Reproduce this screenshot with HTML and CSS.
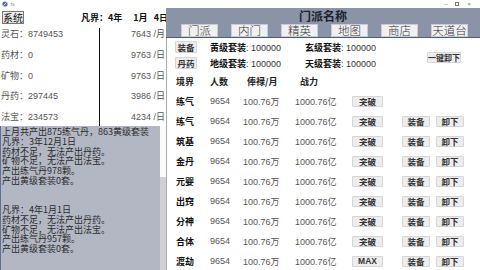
FILE: index.html
```html
<!DOCTYPE html>
<html lang="zh">
<head>
    <meta charset="UTF-8">
    <title>Tk</title>
    <link rel="stylesheet" href="styles.css">
</head>
<body>
<div class="window">
    <div class="titlebar">
        <div class="app-title">
            <svg width="6" height="6" viewBox="0 0 6 6"><circle cx="3" cy="3" r="2.6" fill="#5a6a8a"/><path d="M1.5 4.5 L4.5 1.5" stroke="#e8ecf4" stroke-width="0.9"/></svg>
            <span>Tk</span>
        </div>
        <div class="controls">
            <span>&#8211;</span>
            <span class="max"></span>
            <span>&#215;</span>
        </div>
    </div>

    <div class="main">
        <div class="left">
            <div class="topbar">
                <button class="sys-btn">系统</button>
                <div class="date">
                    <span>凡界：4年</span><span class="gap">1月</span><span class="gap2">4日</span>
                </div>
            </div>

            <div class="resources">
                <div class="res-names">
                    <div class="res-row">灵石：8749453</div>
                    <div class="res-row">药材：0</div>
                    <div class="res-row">矿物：0</div>
                    <div class="res-row">丹药：297445</div>
                    <div class="res-row">法宝：234573</div>
                </div>
                <div class="res-rates">
                    <div class="res-row">7643 /月</div>
                    <div class="res-row">9763 /日</div>
                    <div class="res-row">9763 /日</div>
                    <div class="res-row">3986 /日</div>
                    <div class="res-row">4234 /日</div>
                </div>
            </div>

            <div class="log">
                <div class="log-text">上月共产出875练气丹，863黄级套装
凡界：3年12月1日
药材不足，无法产出丹药。
矿物不足，无法产出法宝。
产出练气丹978颗。
产出黄级套装0套。


凡界：4年1月1日
药材不足，无法产出丹药。
矿物不足，无法产出法宝。
产出练气丹957颗。
产出黄级套装0套。</div>
                <div class="scrollbar"><div class="thumb"></div></div>
            </div>
        </div>

        <div class="right">
            <div class="band">
                <div class="band-title">门派名称</div>
                <div class="tabs">
                    <button class="tab">门派</button>
                    <button class="tab">内门</button>
                    <button class="tab">精英</button>
                    <button class="tab">地图</button>
                    <button class="tab">商店</button>
                    <button class="tab">天道台</button>
                </div>
            </div>

            <div class="body">
                <div class="equip">
                    <button class="btn small">装备</button>
                    <div><b>黄级套装</b>: 100000</div>
                    <div><b>玄级套装</b>: 100000</div>
                    <button class="btn unload-all">一键卸下</button>
                    <button class="btn small">丹药</button>
                    <div><b>地级套装</b>: 100000</div>
                    <div><b>天级套装</b>: 100000</div>
                </div>

                <div class="table">
                    <div class="th">境界</div>
                    <div class="th">人数</div>
                    <div class="th salary">俸禄/月</div>
                    <div class="th power">战力</div>
                    <div></div><div></div><div></div>

                    <div class="name">练气</div>
                    <div class="num">9654</div>
                    <div class="num">100.76<span class="cjk">万</span></div>
                    <div class="num">1000.76<span class="cjk">亿</span></div>
                    <div><button class="btn up">突破</button></div>
                    <div></div><div></div>

                    <div class="name">练气</div>
                    <div class="num">9654</div>
                    <div class="num">100.76<span class="cjk">万</span></div>
                    <div class="num">1000.76<span class="cjk">亿</span></div>
                    <div><button class="btn up">突破</button></div>
                    <div><button class="btn small">装备</button></div>
                    <div><button class="btn small">卸下</button></div>

                    <div class="name">筑基</div>
                    <div class="num">9654</div>
                    <div class="num">100.76<span class="cjk">万</span></div>
                    <div class="num">1000.76<span class="cjk">亿</span></div>
                    <div><button class="btn up">突破</button></div>
                    <div><button class="btn small">装备</button></div>
                    <div><button class="btn small">卸下</button></div>

                    <div class="name">金丹</div>
                    <div class="num">9654</div>
                    <div class="num">100.76<span class="cjk">万</span></div>
                    <div class="num">1000.76<span class="cjk">亿</span></div>
                    <div><button class="btn up">突破</button></div>
                    <div><button class="btn small">装备</button></div>
                    <div><button class="btn small">卸下</button></div>

                    <div class="name">元婴</div>
                    <div class="num">9654</div>
                    <div class="num">100.76<span class="cjk">万</span></div>
                    <div class="num">1000.76<span class="cjk">亿</span></div>
                    <div><button class="btn up">突破</button></div>
                    <div><button class="btn small">装备</button></div>
                    <div><button class="btn small">卸下</button></div>

                    <div class="name">出窍</div>
                    <div class="num">9654</div>
                    <div class="num">100.76<span class="cjk">万</span></div>
                    <div class="num">1000.76<span class="cjk">亿</span></div>
                    <div><button class="btn up">突破</button></div>
                    <div><button class="btn small">装备</button></div>
                    <div><button class="btn small">卸下</button></div>

                    <div class="name">分神</div>
                    <div class="num">9654</div>
                    <div class="num">100.76<span class="cjk">万</span></div>
                    <div class="num">1000.76<span class="cjk">亿</span></div>
                    <div><button class="btn up">突破</button></div>
                    <div><button class="btn small">装备</button></div>
                    <div><button class="btn small">卸下</button></div>

                    <div class="name">合体</div>
                    <div class="num">9654</div>
                    <div class="num">100.76<span class="cjk">万</span></div>
                    <div class="num">1000.76<span class="cjk">亿</span></div>
                    <div><button class="btn up">突破</button></div>
                    <div><button class="btn small">装备</button></div>
                    <div><button class="btn small">卸下</button></div>

                    <div class="name">渡劫</div>
                    <div class="num">9654</div>
                    <div class="num">100.76<span class="cjk">万</span></div>
                    <div class="num">1000.76<span class="cjk">亿</span></div>
                    <div><button class="btn up max-btn">MAX</button></div>
                    <div><button class="btn small">装备</button></div>
                    <div><button class="btn small">卸下</button></div>
                </div>
            </div>
        </div>
    </div>
</div>
</body>
</html>
```

FILE: styles.css
```css
* {
    box-sizing: border-box;
    margin: 0;
    padding: 0;
}
body {
    width: 480px;
    height: 270px;
    overflow: hidden;
    background-color: #ffffff;
    font-family: "Liberation Sans", "Noto Sans CJK SC", sans-serif;
    font-size: 9px;
    color: #333;
}
button {
    padding: 0;
    white-space: nowrap;
    text-align: center;
}
.window {
    width: 480px;
    height: 270px;
    display: flex;
    flex-direction: column;
}

/* title bar */
.titlebar {
    height: 8px;
    display: flex;
    justify-content: space-between;
    align-items: center;
    padding-left: 2px;
}
.app-title {
    display: flex;
    align-items: center;
    gap: 2px;
    font-size: 4px;
    color: #666;
}
.controls {
    display: flex;
    align-items: center;
    gap: 8px;
    padding-right: 9px;
    font-size: 6px;
    color: #777;
}
.controls .max {
    width: 4px;
    height: 4px;
    border: 1px solid #777;
}

.main {
    flex: 1;
    display: flex;
    min-height: 0;
}

/* left side */
.left {
    width: 166px;
    display: flex;
    flex-direction: column;
}
.topbar {
    height: 18px;
    display: flex;
    align-items: flex-start;
    padding: 3px 0 0 2px;
}
.sys-btn {
    width: 24px;
    height: 13px;
    font: 10px/11px "Noto Sans CJK SC", sans-serif;
    color: #111;
    background-color: #ececec;
    border: 1px solid #777;
}
.date {
    margin-left: 57px;
    margin-top: 1px;
    white-space: nowrap;
    font: bold 9px/11px "Noto Sans CJK SC", sans-serif;
    color: #111;
}
.date .gap {
    margin-left: 11px;
}
.date .gap2 {
    margin-left: 6px;
}

.resources {
    height: 100px;
    display: flex;
}
.res-names {
    width: 99px;
    padding-left: 1px;
}
.res-rates {
    flex: 1;
    margin-top: 2px;
    border-left: 1px solid #111;
    text-align: right;
    padding-right: 1px;
}
.res-rates .res-row:first-child {
    margin-top: -2px;
}
.res-row {
    height: 20.75px;
    line-height: 16px;
    color: #555;
}

.log {
    flex: 1;
    display: flex;
    min-height: 0;
    background-color: #b3b7c3;
    border-left: 1px solid #5d6f94;
}
.log-text {
    flex: 1;
    padding: 1px 0 0 1px;
    font: 9px/9.75px "Noto Sans CJK SC", sans-serif;
    color: #2b2b2b;
    white-space: pre;
    overflow: hidden;
}
.scrollbar {
    width: 6px;
    background-color: #cfd0d4;
}
.thumb {
    height: 51px;
    background-color: #fbfbfb;
}

/* right side */
.right {
    flex: 1;
    display: flex;
    flex-direction: column;
}
.band {
    height: 30px;
    background-color: #8b93a7;
    border-bottom: 1px solid #4f5a74;
}
.band-title {
    height: 15px;
    text-align: center;
    font: bold 12px/15px "Noto Sans CJK SC", sans-serif;
    color: #1c2131;
}
.tabs {
    display: flex;
    gap: 13px;
    padding: 1px 0 0 15px;
}
.tab {
    width: 37px;
    height: 13px;
    background-color: #f0f0f0;
    border: 1px solid #c9ccd4;
    font: 300 11.5px/11px "Noto Sans CJK SC", sans-serif;
    color: #333;
}

.body {
    flex: 1;
    border-left: 1px solid #a9a9a9;
}
.btn {
    height: 12px;
    background-color: #ededed;
    border: 1px solid #d6d6d6;
    border-radius: 1px;
    font: bold 8.5px/9px "Noto Sans CJK SC", sans-serif;
    color: #333;
}
.btn.small {
    width: 22px;
}
.equip {
    display: grid;
    grid-template-columns: 35px 95px 122px 40px;
    grid-template-rows: 16px 16px;
    align-items: center;
    padding: 1px 0 0 8px;
    color: #333;
}
.equip b {
    font-family: "Noto Sans CJK SC", sans-serif;
    color: #111;
}
.unload-all {
    grid-row: 1 / span 2;
    grid-column: 4;
    width: 34px;
    height: 11px;
    margin-top: 5px;
    font-size: 8px;
}

.table {
    display: grid;
    grid-template-columns: 34px 33px 52px 57px 50px 34px 28px;
    grid-auto-rows: 20px;
    align-items: center;
    padding-left: 9px;
}
.th {
    font: bold 9px "Noto Sans CJK SC", sans-serif;
    color: #222;
}
.th.salary {
    padding-left: 4px;
}
.th.power {
    padding-left: 5px;
}
.name {
    font: bold 9px "Noto Sans CJK SC", sans-serif;
    color: #111;
}
.num {
    color: #555;
}
.cjk {
    font-family: "Noto Sans CJK SC", sans-serif;
}
.table .btn {
    display: block;
    height: 11px;
}
.btn.up {
    width: 31px;
}
.table .btn.small {
    width: 28px;
}
.max-btn {
    font-family: "Liberation Sans", sans-serif;
}
```
